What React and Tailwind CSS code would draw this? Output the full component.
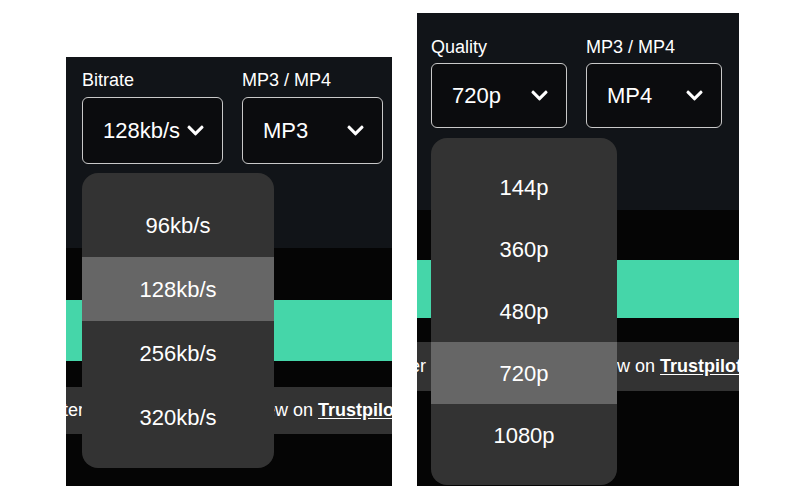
import { FaChevronDown } from 'react-icons/fa';

const font = { fontFamily: "'Liberation Sans', Arial, sans-serif" };

const Chevron = () => (
  <FaChevronDown className="w-[19px] h-[19px] shrink-0 text-white" />
);

const Select = ({ value, className }) => (
  <div className={`flex items-center justify-between pl-5 pr-[17px] border border-[#c9c9c9] rounded-md bg-[#0b0c0e] ${className}`}>
    <span className="text-[22px] text-white whitespace-nowrap">{value}</span>
    <Chevron />
  </div>
);

const ReviewBar = ({ className, leadClass }) => (
  <div className={`flex items-center bg-[#333333] text-white text-[18px] whitespace-nowrap overflow-hidden ${className}`}>
    <div className={`shrink-0 flex justify-end overflow-hidden ${leadClass}`}>
      <span className="shrink-0">Enjoying the converter Please leave us a revie</span>
    </div>
    <span className="shrink-0">
      w on <a className="font-bold underline underline-offset-2">Trustpilot</a>
    </span>
  </div>
);

const Menu = ({ items, selected, className, itemClass }) => (
  <div className={`absolute bg-[#333333] rounded-2xl overflow-hidden ${className}`}>
    {items.map((item) => (
      <div
        key={item}
        className={`flex items-center justify-center text-[22px] text-white ${itemClass} ${item === selected ? 'bg-[#666666]' : ''}`}
      >
        {item}
      </div>
    ))}
  </div>
);

export default function App() {
  return (
    <div className="w-[800px] h-[486px] bg-white overflow-hidden flex items-end pl-[66px] gap-[25px]" style={font}>
      {/* Audio panel */}
      <div className="relative w-[326px] h-[429px] bg-[#050505] flex flex-col shrink-0">
        <div className="h-[191px] bg-[#111418] px-4 pt-[13px] flex gap-[19px]">
          <div className="flex flex-col gap-[6px]">
            <label className="text-[18px] leading-[21px] text-white">Bitrate</label>
            <Select value="128kb/s" className="w-[141px] h-[67px]" />
          </div>
          <div className="flex flex-col gap-[6px]">
            <label className="text-[18px] leading-[21px] text-white">MP3 / MP4</label>
            <Select value="MP3" className="w-[141px] h-[67px]" />
          </div>
        </div>
        <div className="h-[52px]" />
        <div className="h-[61px] bg-[#45d6a9]" />
        <div className="h-[26px]" />
        <ReviewBar className="h-[47px]" leadClass="w-[209px]" />

        <Menu
          items={['96kb/s', '128kb/s', '256kb/s', '320kb/s']}
          selected="128kb/s"
          className="left-4 top-[116px] w-[192px] h-[295px] pt-5 pb-[19px]"
          itemClass="h-16"
        />
      </div>

      {/* Video panel */}
      <div className="relative w-[322px] h-[473px] bg-[#050505] flex flex-col shrink-0">
        <div className="h-[197px] bg-[#111418] px-[14px] pt-6 flex gap-[19px]">
          <div className="flex flex-col gap-[5px]">
            <label className="text-[18px] leading-[21px] text-white">Quality</label>
            <Select value="720p" className="w-[136px] h-[65px]" />
          </div>
          <div className="flex flex-col gap-[5px]">
            <label className="text-[18px] leading-[21px] text-white">MP3 / MP4</label>
            <Select value="MP4" className="w-[136px] h-[65px]" />
          </div>
        </div>
        <div className="h-[50px]" />
        <div className="h-[58px] bg-[#45d6a9]" />
        <div className="h-[24px]" />
        <ReviewBar className="h-[49px]" leadClass="w-[200px]" />

        <Menu
          items={['144p', '360p', '480p', '720p', '1080p']}
          selected="720p"
          className="left-[14px] top-[125px] w-[186px] h-[347px] pt-[18px] pb-[19px]"
          itemClass="h-[62px]"
        />
      </div>
    </div>
  );
}
